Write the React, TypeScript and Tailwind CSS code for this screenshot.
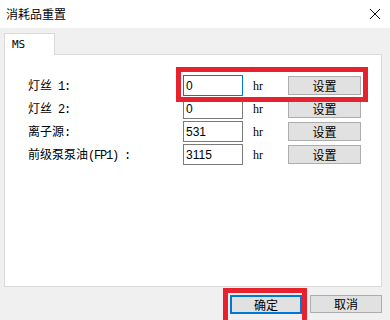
const ui = { fontFamily: '"Noto Sans CJK SC", "Liberation Sans", sans-serif' };
const serif = { fontFamily: '"Liberation Serif", "Noto Sans CJK SC", serif' };
const mono = { fontFamily: '"Liberation Mono", monospace', letterSpacing: '-1.2px' };

// label pieces: [cjk, latin]
const rows = [
  { cjk: '灯丝', latin: ' 1:', value: '0', focused: true },
  { cjk: '灯丝', latin: ' 2:', value: '0' },
  { cjk: '离子源', latin: ':', value: '531' },
  { cjk: '前级泵泵油', latin: '(FP1) :', value: '3115' },
];

function Row({ cjk, latin, value, focused }: { cjk: string; latin: string; value: string; focused?: boolean }) {
  return (
    <div className="flex items-center h-[23px]">
      <div className="w-[155px] text-[12px] text-black leading-none whitespace-pre">
        <span style={ui}>{cjk}</span>
        <span style={mono}>{latin}</span>
      </div>
      <div
        className={`w-[60px] h-[21px] bg-white border flex items-center pl-[2px] text-[12px] text-black ${
          focused ? 'border-[#0078d7]' : 'border-[#7a7a7a]'
        }`}
        style={{ fontFamily: '"Liberation Sans", sans-serif' }}
      >
        {value}
      </div>
      <div className="w-[45px] pl-[10px] text-[12px] text-black" style={serif}>
        hr
      </div>
      <button
        className="w-[73px] h-[19px] bg-[#e1e1e1] border border-[#adadad] text-[12px] text-black leading-none flex items-center justify-center"
        style={ui}
      >
        设置
      </button>
    </div>
  );
}

export default function App() {
  return (
    <div className="w-[390px] h-[320px] bg-[#f0f0f0] overflow-hidden relative" style={ui}>
      {/* title bar */}
      <div className="h-[28px] bg-white flex items-center justify-between pl-[6px] pr-[8px]">
        <span className="text-[12px] text-black">消耗品重置</span>
        <svg width="12" height="12" viewBox="0 0 12 12" className="mr-[1px]">
          <path d="M1 1 L11 11 M11 1 L1 11" stroke="#111" strokeWidth="1" />
        </svg>
      </div>

      <div className="px-[4px] pt-[5px]">
        {/* tab strip */}
        <div className="flex">
          <div
            className="w-[51px] h-[22px] bg-white border border-b-0 border-[#d9d9d9] pl-[7px] pt-[3px] text-[11px] text-black -mb-px relative z-10"
            style={{ fontFamily: '"DejaVu Sans Mono", monospace' }}
          >
            MS
          </div>
        </div>

        {/* panel */}
        <div className="w-[378px] h-[233px] bg-white border border-[#d9d9d9] relative pl-[23px] pt-[19px]">
          {rows.map((r) => (
            <Row key={r.cjk + r.latin} {...r} />
          ))}
          <div className="absolute left-[171px] top-[12px] w-[192px] h-[35px] border-[5px] border-[#e5222d] pointer-events-none" />
        </div>

        {/* footer buttons */}
        <div className="flex justify-end gap-[8px] pt-[8px] pr-[4px]">
          <div className="relative">
            <button className="w-[72px] h-[19px] bg-[#e1e1e1] border-2 border-[#0078d7] text-[12px] text-black leading-none flex items-center justify-center">
              确定
            </button>
            <div className="absolute left-[-7px] top-[-7px] w-[84px] h-[40px] border-[5px] border-[#e5222d] pointer-events-none" />
          </div>
          <button className="w-[72px] h-[18px] bg-[#e1e1e1] border border-[#adadad] text-[12px] text-black leading-none flex items-center justify-center">
            取消
          </button>
        </div>
      </div>
    </div>
  );
}
